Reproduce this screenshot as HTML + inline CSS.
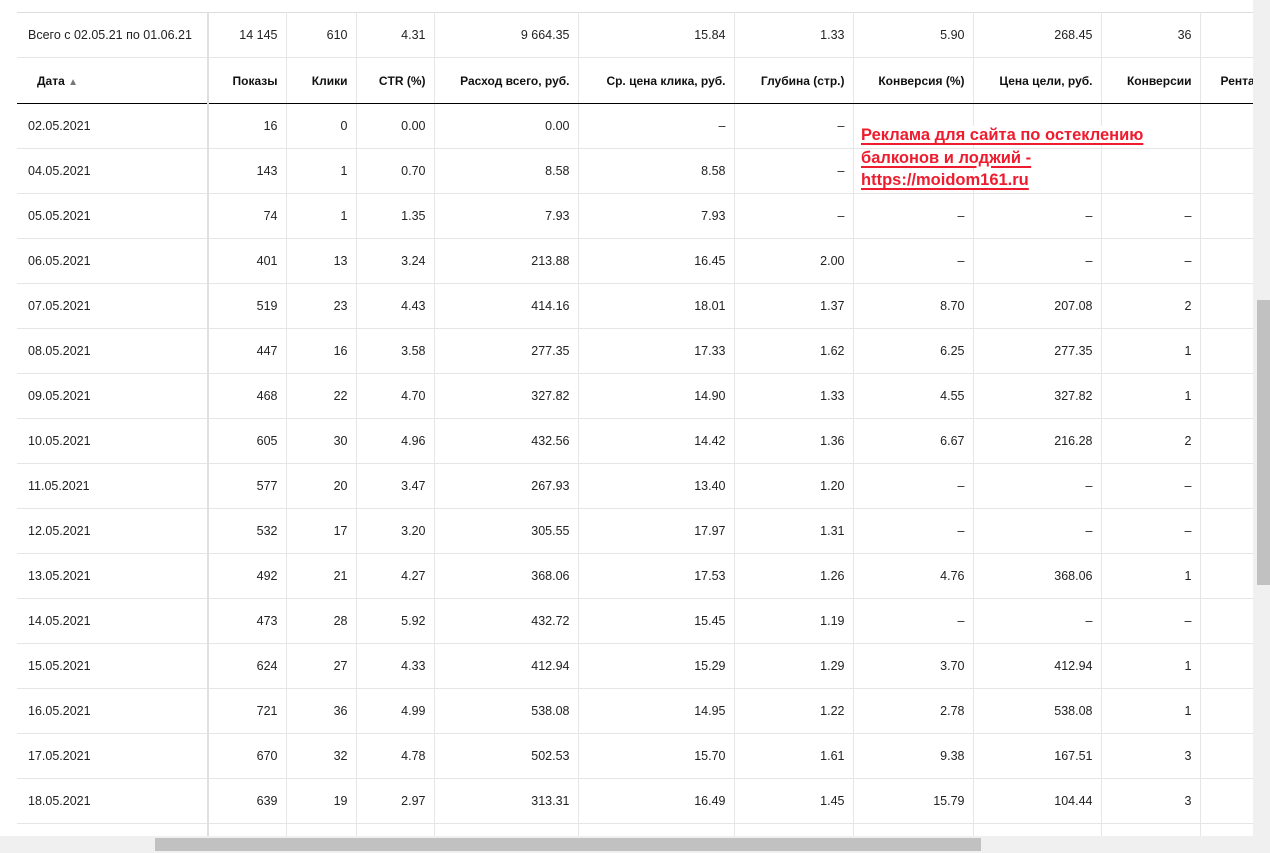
<!DOCTYPE html>
<html><head><meta charset="utf-8"><style>
body{margin:0;width:1270px;height:853px;overflow:hidden;background:#fff;font-family:"Liberation Sans",sans-serif;position:relative}
.wrap{position:absolute;left:17px;top:12px;width:1236px;height:824px;overflow:hidden}
table{border-collapse:collapse;table-layout:fixed;width:1306px;font-size:12.5px;color:#222}
td,th{height:44px;border:1px solid #e6e6e6;border-left:none;text-align:right;padding:0 8px;white-space:nowrap;overflow:hidden}
td:first-child,th:first-child{text-align:left;padding-left:11px;border-right:2px solid #e0e0e0}
tr:first-child td{border-top:1px solid #ddd}
th{font-weight:bold;color:#111;height:45px;border-bottom:1px solid #000;font-size:12px}
th:first-child{padding-left:20px}
th:last-child{padding-left:20px}
.ad{position:absolute;left:857px;top:124px;font-weight:bold;font-size:16.5px;color:#ee1c2e;line-height:22.5px;text-decoration:underline;text-decoration-thickness:2px;text-underline-offset:3px}
.ad span{background:#fff;padding:0 4px}
.vs{position:absolute;left:1253px;top:0;width:17px;height:836px;background:#f0f0f0}
.vt{position:absolute;left:1257px;top:300px;width:13px;height:285px;background:#c1c1c1}
.hs{position:absolute;left:0;top:836px;width:1270px;height:17px;background:#f0f0f0}
.ht{position:absolute;left:155px;top:838px;width:826px;height:13px;background:#c1c1c1}
</style></head><body>
<div class="wrap"><table>
<colgroup><col style="width:191px"><col style="width:78px"><col style="width:70px"><col style="width:78px"><col style="width:144px"><col style="width:156px"><col style="width:119px"><col style="width:120px"><col style="width:128px"><col style="width:99px"><col style="width:123px"></colgroup>
<tr><td>Всего с 02.05.21 по 01.06.21</td><td>14 145</td><td>610</td><td>4.31</td><td>9 664.35</td><td>15.84</td><td>1.33</td><td>5.90</td><td>268.45</td><td>36</td><td></td></tr>
<tr><th>Дата <span style="color:#777;font-size:10px">▲</span></th><th>Показы</th><th>Клики</th><th>CTR (%)</th><th>Расход всего, руб.</th><th>Ср. цена клика, руб.</th><th>Глубина (стр.)</th><th>Конверсия (%)</th><th>Цена цели, руб.</th><th>Конверсии</th><th style="text-align:left">Рентабельность</th></tr>
<tr><td>02.05.2021</td><td>16</td><td>0</td><td>0.00</td><td>0.00</td><td>–</td><td>–</td><td></td><td></td><td></td><td></td></tr>
<tr><td>04.05.2021</td><td>143</td><td>1</td><td>0.70</td><td>8.58</td><td>8.58</td><td>–</td><td></td><td></td><td></td><td></td></tr>
<tr><td>05.05.2021</td><td>74</td><td>1</td><td>1.35</td><td>7.93</td><td>7.93</td><td>–</td><td>–</td><td>–</td><td>–</td><td></td></tr>
<tr><td>06.05.2021</td><td>401</td><td>13</td><td>3.24</td><td>213.88</td><td>16.45</td><td>2.00</td><td>–</td><td>–</td><td>–</td><td></td></tr>
<tr><td>07.05.2021</td><td>519</td><td>23</td><td>4.43</td><td>414.16</td><td>18.01</td><td>1.37</td><td>8.70</td><td>207.08</td><td>2</td><td></td></tr>
<tr><td>08.05.2021</td><td>447</td><td>16</td><td>3.58</td><td>277.35</td><td>17.33</td><td>1.62</td><td>6.25</td><td>277.35</td><td>1</td><td></td></tr>
<tr><td>09.05.2021</td><td>468</td><td>22</td><td>4.70</td><td>327.82</td><td>14.90</td><td>1.33</td><td>4.55</td><td>327.82</td><td>1</td><td></td></tr>
<tr><td>10.05.2021</td><td>605</td><td>30</td><td>4.96</td><td>432.56</td><td>14.42</td><td>1.36</td><td>6.67</td><td>216.28</td><td>2</td><td></td></tr>
<tr><td>11.05.2021</td><td>577</td><td>20</td><td>3.47</td><td>267.93</td><td>13.40</td><td>1.20</td><td>–</td><td>–</td><td>–</td><td></td></tr>
<tr><td>12.05.2021</td><td>532</td><td>17</td><td>3.20</td><td>305.55</td><td>17.97</td><td>1.31</td><td>–</td><td>–</td><td>–</td><td></td></tr>
<tr><td>13.05.2021</td><td>492</td><td>21</td><td>4.27</td><td>368.06</td><td>17.53</td><td>1.26</td><td>4.76</td><td>368.06</td><td>1</td><td></td></tr>
<tr><td>14.05.2021</td><td>473</td><td>28</td><td>5.92</td><td>432.72</td><td>15.45</td><td>1.19</td><td>–</td><td>–</td><td>–</td><td></td></tr>
<tr><td>15.05.2021</td><td>624</td><td>27</td><td>4.33</td><td>412.94</td><td>15.29</td><td>1.29</td><td>3.70</td><td>412.94</td><td>1</td><td></td></tr>
<tr><td>16.05.2021</td><td>721</td><td>36</td><td>4.99</td><td>538.08</td><td>14.95</td><td>1.22</td><td>2.78</td><td>538.08</td><td>1</td><td></td></tr>
<tr><td>17.05.2021</td><td>670</td><td>32</td><td>4.78</td><td>502.53</td><td>15.70</td><td>1.61</td><td>9.38</td><td>167.51</td><td>3</td><td></td></tr>
<tr><td>18.05.2021</td><td>639</td><td>19</td><td>2.97</td><td>313.31</td><td>16.49</td><td>1.45</td><td>15.79</td><td>104.44</td><td>3</td><td></td></tr>
<tr><td></td><td></td><td></td><td></td><td></td><td></td><td></td><td></td><td></td><td></td><td></td></tr>
</table></div>
<div class="ad"><span>Реклама для сайта по остеклению </span><br><span>балконов и лоджий - </span><br><span>https://moidom161.ru</span></div>
<div class="vs"></div><div class="vt"></div>
<div class="hs"></div><div class="ht"></div>
</body></html>
